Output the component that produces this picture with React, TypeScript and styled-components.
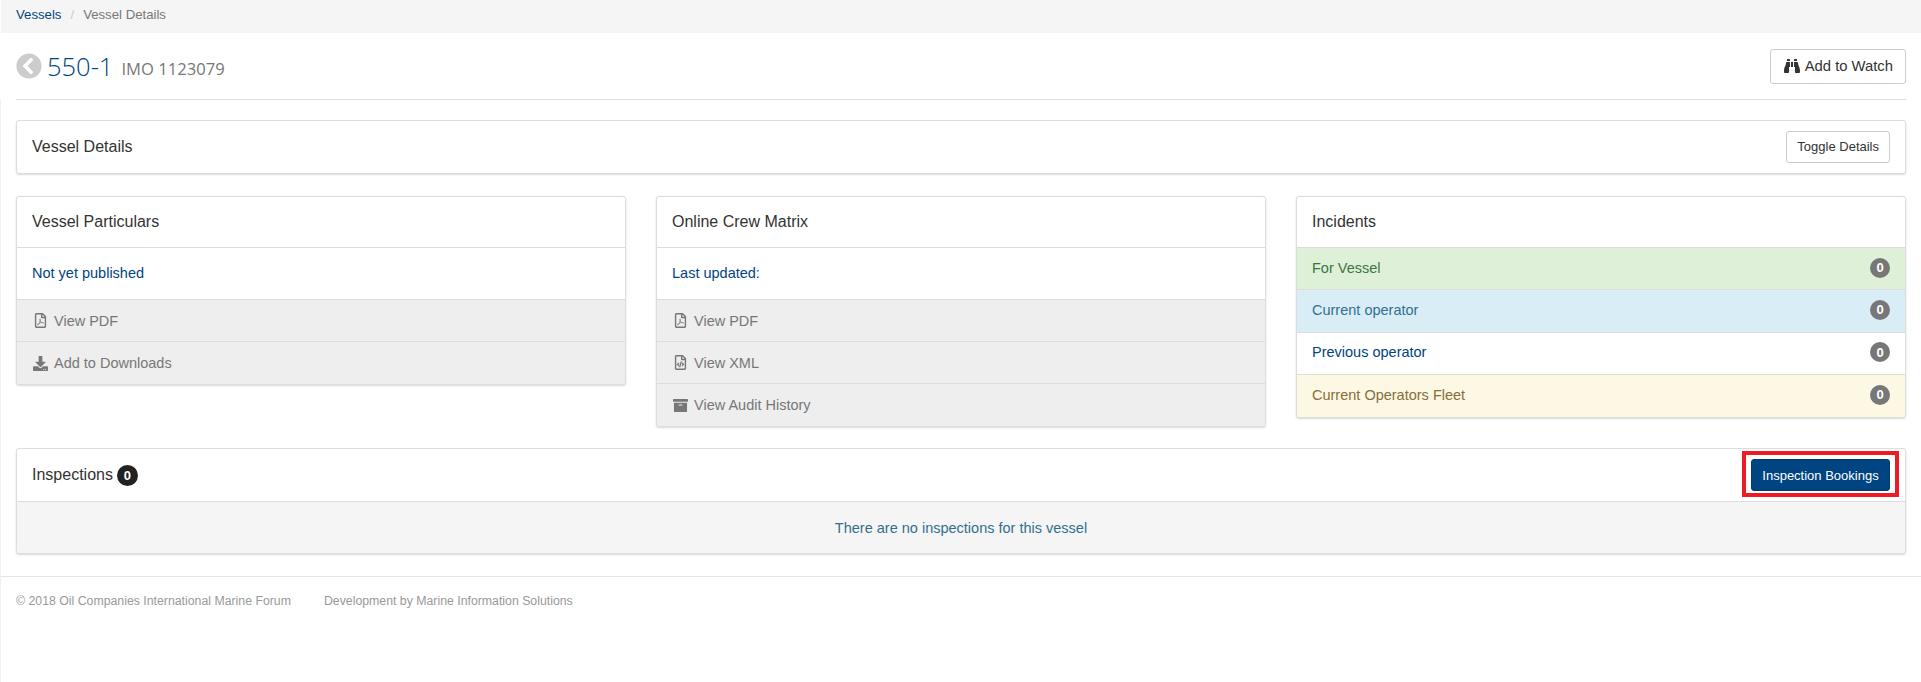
import { ReactNode } from 'react';
import { createGlobalStyle, styled } from 'styled-components';
import { FaArchive, FaBinoculars, FaChevronCircleLeft, FaDownload, FaRegFileCode, FaRegFilePdf } from 'react-icons/fa';

const GlobalStyle = createGlobalStyle`
  * { box-sizing: border-box; }
  html, body { margin: 0; padding: 0; background: #fff; }
  body {
    font-family: "Liberation Sans", Arial, sans-serif;
    font-size: 14.5px;
    line-height: 20px;
    color: #333;
  }
`;

const Breadcrumb = styled.nav`
  height: 33px;
  margin-left: 1px;
  padding: 5px 15px;
  background: #f5f5f5;
  font-size: 13.2px;
  color: #777;

  a { color: #004481; text-decoration: none; }
  span { color: #ccc; padding: 0 9px; }
`;

const PageHeader = styled.header`
  margin: 0 15px 0 16px;
  height: 67px;
  border-bottom: 1px solid #ddd;
  display: flex;
  align-items: center;
  justify-content: space-between;
`;

const Title = styled.h1`
  margin: 0;
  display: flex;
  align-items: center;
  font-family: "Open Sans", sans-serif;
  font-size: 25.5px;
  font-weight: 300;
  line-height: 32px;
  color: #004481;

  svg { color: #ccc; font-size: 26px; margin-right: 5px; }
  small { margin-left: 8px; margin-top: 5px; font-size: 16.6px; font-weight: 400; color: #777; }
`;

const Button = styled.button`
  display: inline-flex;
  align-items: center;
  justify-content: center;
  gap: 5px;
  background: #fff;
  border: 1px solid #ccc;
  border-radius: 3px;
  color: #333;
  font-family: inherit;
  font-size: 14.8px;
  height: 35px;
  padding: 0 12px 0 13px;

  svg { font-size: 16px; }
`;

const SmallButton = styled(Button)`
  font-size: 13px;
  height: 32px;
  padding: 0 10px;
`;

const PrimaryButton = styled(SmallButton)`
  position: relative;
  width: 139px;
  background: #004481;
  border-color: #003a6e;
  color: #fff;

  &::after {
    content: '';
    position: absolute;
    top: -9px;
    left: -10px;
    right: -10px;
    bottom: -7px;
    border: 4.5px solid #ed1c24;
  }
`;

const Main = styled.main`
  min-height: 582px;
  border-left: 1px solid #f0f0f0;
  padding-top: 20px;
`;

const Content = styled.div`
  margin: 0 15px;
  display: flex;
  flex-direction: column;
  gap: 21px;
`;

const Panel = styled.section`
  background: #fff;
  border: 1px solid #ddd;
  border-radius: 3px;
  box-shadow: 0 1px 2px rgba(0, 0, 0, 0.15);
  overflow: hidden;
`;

const PanelHeading = styled.div<{ $height?: number; $divider?: boolean }>`
  height: ${({ $height }) => $height ?? 51}px;
  padding: 0 15px;
  display: flex;
  align-items: center;
  justify-content: space-between;
  font-size: 16px;
  color: #333;
  border-bottom: ${({ $divider }) => ($divider === false ? 'none' : '1px solid #ddd')};
`;

const DetailsHeading = styled(PanelHeading)`
  padding-bottom: 1px;
`;

const Columns = styled.div`
  margin-top: 1px;
  display: grid;
  grid-template-columns: repeat(3, 1fr);
  gap: 30px;
  align-items: start;
`;

const PanelBody = styled.div`
  height: 52px;
  padding: 0 15px 2px;
  display: flex;
  align-items: center;
  color: #004481;
  border-bottom: 1px solid #ddd;
`;

const LinkRow = styled.a`
  height: 42px;
  padding: 0 15px;
  display: flex;
  align-items: center;
  gap: 5px;
  background: #eee;
  color: #777;
  border-bottom: 1px solid #ddd;

  &:last-child { border-bottom: none; }
  svg { width: 17px; font-size: 15px; color: #777; }
`;

const tones = {
  success: { bg: '#dff0d8', color: '#3c763d' },
  info: { bg: '#d9edf7', color: '#31708f' },
  plain: { bg: '#fff', color: '#004481' },
  warning: { bg: '#fcf8e3', color: '#8a6d3b' },
};

const IncidentRow = styled.div<{ $tone: keyof typeof tones }>`
  height: 42.25px;
  padding: 0 15px 2px;
  display: flex;
  align-items: center;
  justify-content: space-between;
  background: ${({ $tone }) => tones[$tone].bg};
  color: ${({ $tone }) => tones[$tone].color};
  border-bottom: 1px solid #ddd;

  &:last-child { border-bottom: none; }
`;

const Badge = styled.span<{ $dark?: boolean }>`
  display: inline-flex;
  align-items: center;
  justify-content: center;
  width: ${({ $dark }) => ($dark ? 21 : 20)}px;
  height: ${({ $dark }) => ($dark ? 21 : 20)}px;
  border-radius: 50%;
  background: ${({ $dark }) => ($dark ? '#222' : '#777')};
  color: #fff;
  font-size: 13px;
  font-weight: 700;
  line-height: 1;
`;

const HeadingLabel = styled.span`
  display: flex;
  align-items: center;
  gap: 4px;
`;

const EmptyRow = styled.div`
  height: 51px;
  display: flex;
  align-items: center;
  justify-content: center;
  background: #f5f5f5;
  color: #31708f;
`;

const Footer = styled.footer`
  margin-top: 22px;
  border-top: 1px solid #e5e5e5;
  padding: 14px 15px;
  display: flex;
  gap: 33px;
  font-size: 12.3px;
  color: #999;
`;

const LinkCard = ({ title, body, links }: { title: string; body: string; links: { icon: ReactNode; label: string }[] }) => (
  <Panel>
    <PanelHeading>{title}</PanelHeading>
    <PanelBody>{body}</PanelBody>
    {links.map((link) => (
      <LinkRow key={link.label}>
        {link.icon}
        {link.label}
      </LinkRow>
    ))}
  </Panel>
);

export default function App() {
  return (
    <>
      <GlobalStyle />
      <Breadcrumb>
        <a>Vessels</a>
        <span>/</span>
        Vessel Details
      </Breadcrumb>
      <PageHeader>
        <Title>
          <FaChevronCircleLeft />
          550-1
          <small>IMO 1123079</small>
        </Title>
        <Button>
          <FaBinoculars />
          Add to Watch
        </Button>
      </PageHeader>
      <Main>
        <Content>
          <Panel>
            <DetailsHeading $height={52} $divider={false}>
              Vessel Details
              <SmallButton>Toggle Details</SmallButton>
            </DetailsHeading>
          </Panel>
          <Columns>
            <LinkCard
              title="Vessel Particulars"
              body="Not yet published"
              links={[
                { icon: <FaRegFilePdf />, label: 'View PDF' },
                { icon: <FaDownload />, label: 'Add to Downloads' },
              ]}
            />
            <LinkCard
              title="Online Crew Matrix"
              body="Last updated:"
              links={[
                { icon: <FaRegFilePdf />, label: 'View PDF' },
                { icon: <FaRegFileCode />, label: 'View XML' },
                { icon: <FaArchive />, label: 'View Audit History' },
              ]}
            />
            <Panel>
              <PanelHeading>Incidents</PanelHeading>
              <IncidentRow $tone="success">For Vessel<Badge>0</Badge></IncidentRow>
              <IncidentRow $tone="info">Current operator<Badge>0</Badge></IncidentRow>
              <IncidentRow $tone="plain">Previous operator<Badge>0</Badge></IncidentRow>
              <IncidentRow $tone="warning">Current Operators Fleet<Badge>0</Badge></IncidentRow>
            </Panel>
          </Columns>
          <Panel>
            <PanelHeading $height={53}>
              <HeadingLabel>
                Inspections <Badge $dark>0</Badge>
              </HeadingLabel>
              <PrimaryButton>Inspection Bookings</PrimaryButton>
            </PanelHeading>
            <EmptyRow>There are no inspections for this vessel</EmptyRow>
          </Panel>
        </Content>
        <Footer>
          <span>© 2018 Oil Companies International Marine Forum</span>
          <span>Development by Marine Information Solutions</span>
        </Footer>
      </Main>
    </>
  );
}
